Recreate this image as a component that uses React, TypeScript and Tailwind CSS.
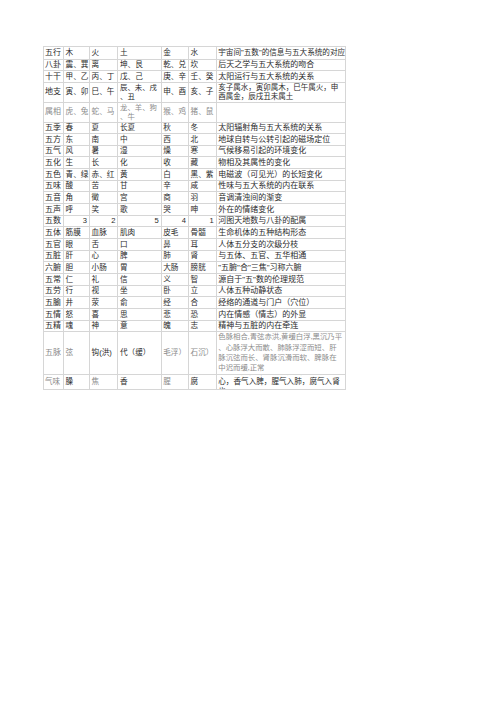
import React from "react";

type Cell = { t: React.ReactNode; light?: boolean; right?: boolean; size?: string };
type Row = { h: string; cells: (string | Cell)[] };

const dark = "text-[#2b2b2b] font-['Liberation_Sans','Noto_Sans_CJK_SC',sans-serif] leading-[9.5px]";
const light = "text-[#8c8c8c] font-['Liberation_Serif','Noto_Sans_CJK_SC',serif] leading-[9.5px]";

// font size per column
const colSize = ["text-[8px]", "text-[7.6px]", "text-[7.6px]", "text-[7.6px]", "text-[7.6px]", "text-[7.6px]", "text-[8px]"];

const L = (t: React.ReactNode): Cell => ({ t, light: true });
const N = (t: string): Cell => ({ t, right: true });

const rows: Row[] = [
  { h: "h-[12.5px]", cells: ["五行", "木", "火", "土", "金", "水", { t: '宇宙间"五数"的信息与五大系统的对应', size: "text-[7.6px]" }] },
  { h: "h-[11.5px]", cells: ["八卦", "震、巽", "离", "坤、艮", "乾、兑", "坎", "后天之学与五大系统的吻合"] },
  { h: "h-[11.5px]", cells: ["十干", "甲、乙", "丙、丁", "戊、己", "庚、辛", "壬、癸", "太阳运行与五大系统的关系"] },
  {
    h: "h-[20px]",
    cells: [
      "地支", "寅、卯", "巳、午",
      { t: <>辰、未、戌<br />、丑</>, size: "text-[7.4px]" },
      "申、酉", "亥、子",
      { t: <>亥子属水，寅卯属木，巳午属火，申<br />酉属金，辰戌丑未属土</>, size: "text-[7.5px]" },
    ],
  },
  {
    h: "h-[20px]",
    cells: [L("属相"), L("虎、兔"), L("蛇、马"), { t: <>龙、羊、狗<br />、牛</>, light: true, size: "text-[7.4px]" }, L("猴、鸡"), L("猪、鼠"), L("")],
  },
  { h: "h-[11.67px]", cells: ["五季", "春", "夏", "长夏", "秋", "冬", "太阳辐射角与五大系统的关系"] },
  { h: "h-[11.67px]", cells: ["五方", "东", "南", "中", "西", "北", "地球自转与公转引起的磁场定位"] },
  { h: "h-[11.67px]", cells: ["五气", "风", "暑", "湿", "燥", "寒", "气候移易引起的环境变化"] },
  { h: "h-[11.67px]", cells: ["五化", "生", "长", "化", "收", "藏", "物相及其属性的变化"] },
  { h: "h-[11.67px]", cells: ["五色", "青、绿", "赤、红", "黄", "白", "黑、紫", "电磁波（可见光）的长短变化"] },
  { h: "h-[11.67px]", cells: ["五味", "酸", "苦", "甘", "辛", "咸", "性味与五大系统的内在联系"] },
  { h: "h-[11.67px]", cells: ["五音", "角", "徵", "宫", "商", "羽", "音调清浊间的渐变"] },
  { h: "h-[11.67px]", cells: ["五声", "呼", "笑", "歌", "哭", "呻", "外在的情绪变化"] },
  { h: "h-[11.67px]", cells: ["五数", N("3"), N("2"), N("5"), N("4"), N("1"), "河图天地数与八卦的配属"] },
  { h: "h-[11.67px]", cells: ["五体", "筋膜", "血脉", "肌肉", "皮毛", "骨髓", "生命机体的五种结构形态"] },
  { h: "h-[11.67px]", cells: ["五官", "眼", "舌", "口", "鼻", "耳", "人体五分支的次级分枝"] },
  { h: "h-[11.67px]", cells: ["五脏", "肝", "心", "脾", "肺", "肾", "与五体、五官、五华相通"] },
  { h: "h-[11.67px]", cells: ["六腑", "胆", "小肠", "胃", "大肠", "膀胱", '"五腑"合"三焦"习称六腑'] },
  { h: "h-[11.67px]", cells: ["五常", "仁", "礼", "信", "义", "智", '源自于"五"数的伦理规范'] },
  { h: "h-[11.67px]", cells: ["五劳", "行", "视", "坐", "卧", "立", "人体五种动静状态"] },
  { h: "h-[11.67px]", cells: ["五腧", "井", "荥", "俞", "经", "合", "经络的通道与门户（穴位）"] },
  { h: "h-[11.67px]", cells: ["五情", "怒", "喜", "思", "悲", "恐", "内在情感（情志）的外显"] },
  { h: "h-[11.67px]", cells: ["五精", "魂", "神", "意", "魄", "志", "精神与五脏的内在牵连"] },
  {
    h: "h-[42.5px]",
    cells: [
      L("五脉"), L("弦"), "钩(洪)", "代（缓）", L("毛浮）"), L("石沉）"),
      {
        light: true,
        size: "text-[7.4px]",
        t: (
          <div className="leading-[10.3px]">
            色脉相合,青弦赤洪,黄缓白浮,黑沉乃平<br />
            、心脉浮大而散、肺脉浮涩而短、肝<br />
            脉沉弦而长、肾脉沉滑而软、脾脉在<br />
            中迟而缓,正常
          </div>
        ),
      },
    ],
  },
];

const cols = ["w-[20.6px]", "w-[26px]", "w-[28.4px]", "w-[43.3px]", "w-[27.3px]", "w-[27.7px]", "w-[129.7px]"];

export default function App() {
  return (
    <div className="min-h-[702px] w-[496px] bg-white pt-[46px] pl-[42.5px]">
      <table className="table-fixed border-collapse w-[303px]">
        <colgroup>
          {cols.map((c, i) => (
            <col key={i} className={c} />
          ))}
        </colgroup>
        <tbody>
          {rows.map((row, ri) => (
            <tr key={ri} className={row.h}>
              {row.cells.map((cell, ci) => {
                const c: Cell = typeof cell === "string" ? { t: cell } : cell;
                return (
                  <td
                    key={ci}
                    className={`border border-[#d6d6d6] p-0 pl-[1.5px] align-middle whitespace-nowrap ${c.light ? light : dark} ${c.size ?? colSize[ci]} ${c.right ? "text-right pr-[2px]" : "text-left"}`}
                  >
                    {c.t}
                  </td>
                );
              })}
            </tr>
          ))}

          {/* last row: description overflows its cell and is clipped top and bottom */}
          <tr className="h-[15.5px]">
            <td className={`border border-[#d6d6d6] p-0 pl-[1.5px] align-middle text-[7.6px] ${light}`}>气味</td>
            <td className={`border border-[#d6d6d6] p-0 pl-[1.5px] align-middle text-[7.6px] ${dark}`}>臊</td>
            <td className={`border border-[#d6d6d6] p-0 pl-[1.5px] align-middle text-[7.6px] ${light}`}>焦</td>
            <td className={`border border-[#d6d6d6] p-0 pl-[1.5px] align-middle text-[7.6px] ${dark}`}>香</td>
            <td className={`border border-[#d6d6d6] p-0 pl-[1.5px] align-middle text-[7.6px] ${light}`}>腥</td>
            <td className={`border border-[#d6d6d6] p-0 pl-[1.5px] align-middle text-[7.6px] ${dark}`}>腐</td>
            <td className={`border border-[#d6d6d6] p-0 pl-[1.5px] align-middle text-[7.6px] ${dark}`}>
              <div className="h-[14.5px] overflow-hidden flex flex-col justify-center">
                <div className="whitespace-nowrap leading-[10px]">
                  五气入鼻，臊气入肝，焦气入<br />
                  心，香气入脾，腥气入肺，腐气入肾<br />
                  也
                </div>
              </div>
            </td>
          </tr>
        </tbody>
      </table>
    </div>
  );
}
